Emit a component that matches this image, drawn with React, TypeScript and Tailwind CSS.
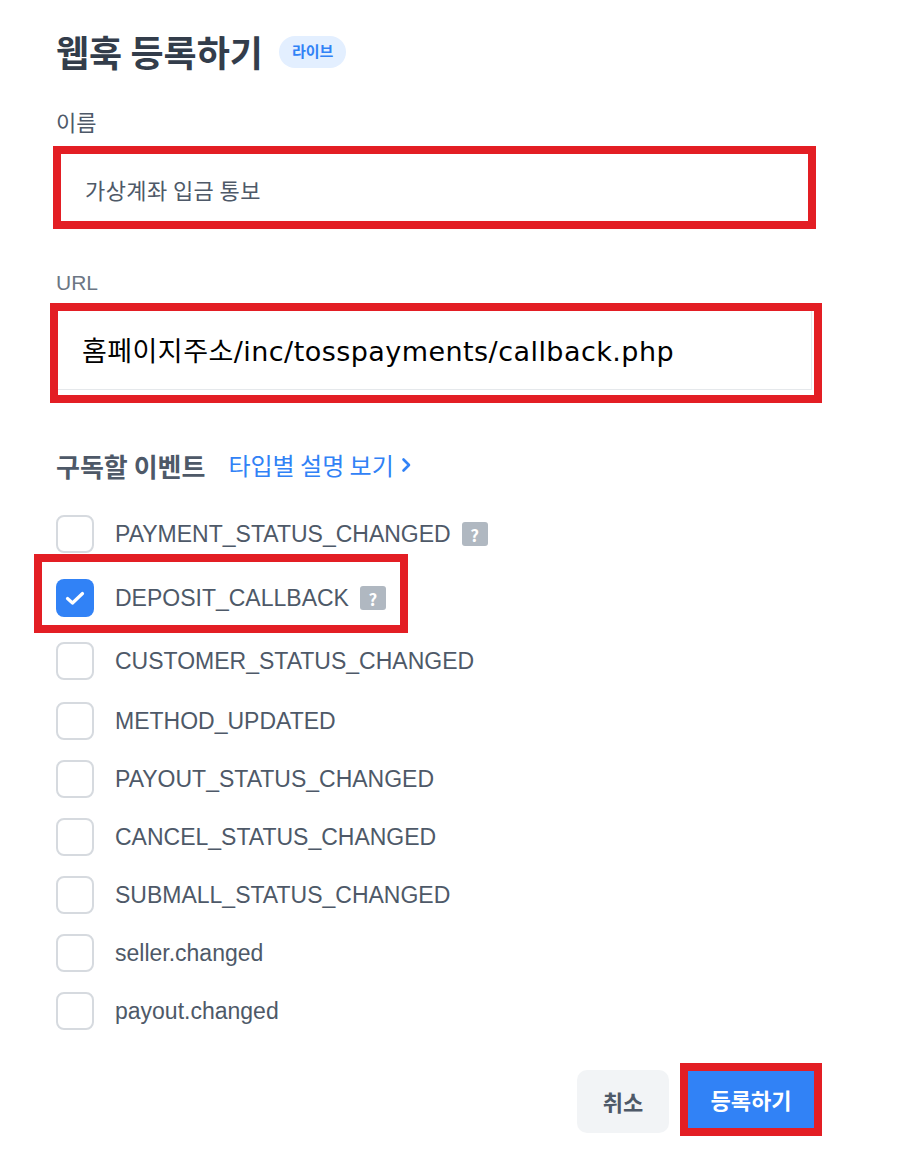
import React from "react";

const SANS = "font-['Liberation_Sans','Noto_Sans_CJK_KR',sans-serif]";
const KR = "font-['Noto_Sans_CJK_KR','Liberation_Sans',sans-serif]";

const events = [
  { name: "PAYMENT_STATUS_CHANGED", help: true, h: "h-[64px]" },
  { name: "DEPOSIT_CALLBACK", help: true, h: "h-[64px]", checked: true },
  { name: "CUSTOMER_STATUS_CHANGED", h: "h-[62px]" },
  { name: "METHOD_UPDATED", h: "h-[58px]" },
  { name: "PAYOUT_STATUS_CHANGED", h: "h-[58px]" },
  { name: "CANCEL_STATUS_CHANGED", h: "h-[58px]" },
  { name: "SUBMALL_STATUS_CHANGED", h: "h-[58px]" },
  { name: "seller.changed", h: "h-[58px]" },
  { name: "payout.changed", h: "h-[58px]" },
];

const Checkbox = ({ checked }: { checked?: boolean }) =>
  checked ? (
    <div className="w-[38px] h-[38px] rounded-[8px] bg-[#3182f6] flex items-center justify-center shrink-0">
      <svg width="24" height="24" viewBox="0 0 24 24" fill="none">
        <path d="M4.5 12.5l5 4.5 10-9.5" stroke="white" strokeWidth="3.2" strokeLinecap="round" strokeLinejoin="round" />
      </svg>
    </div>
  ) : (
    <div className="w-[38px] h-[38px] rounded-[8px] border-[2.5px] border-[#d6dadf] bg-white shrink-0" />
  );

const HelpIcon = () => (
  <span className="ml-[11px] w-[26px] h-[24px] rounded-[3px] bg-[#b0b8c1] text-white text-[17px] font-bold flex items-center justify-center leading-none">
    ?
  </span>
);

const EventRow = ({ name, help, checked }: { name: string; help?: boolean; checked?: boolean }) => (
  <div className="flex items-center">
    <Checkbox checked={checked} />
    <span className={`ml-[21px] text-[23px] text-[#4e5968] ${SANS}`}>{name}</span>
    {help && <HelpIcon />}
  </div>
);

export default function App() {
  return (
    <div className={`w-[916px] h-[1162px] bg-white pl-[56px] ${KR}`}>
      <div className="w-[766px] pt-[31px] flex flex-col">
        {/* title */}
        <div className="flex items-center h-[41px]">
          <h1 className="text-[36px] leading-[41px] font-bold text-[#333d4b]">웹훅 등록하기</h1>
          <span className="ml-[16px] h-[32px] px-[13px] rounded-full bg-[#e3efff] text-[#3182f6] text-[15px] font-bold flex items-center">
            라이브
          </span>
        </div>

        {/* name */}
        <label className="mt-[35px] text-[22px] leading-[28px] text-[#4e5968]">이름</label>
        <div className="mt-[11px] -ml-[3px] w-[763px] h-[83px] border-[8px] border-[#e31e24] flex items-center pl-[24px] pt-[4px]">
          <span className="text-[22px] tracking-[0.4px] text-[#4e5968]">가상계좌 입금 통보</span>
        </div>

        {/* url */}
        <label className={`mt-[40px] text-[21px] leading-[28px] text-[#6b7684] ${SANS}`}>URL</label>
        <div className="mt-[6px] -ml-[6px] w-[772px] h-[100px] border-[8px] border-[#e31e24]">
          <div className="h-[79px] mr-[2px] border-b border-r border-[#e5e8eb] flex items-center pl-[24px] pt-[4px]">
            <span className="text-[27px] tracking-[0.45px] text-black font-['DejaVu_Sans','Noto_Sans_CJK_KR',sans-serif]">
              홈페이지주소/inc/tosspayments/callback.php
            </span>
          </div>
        </div>

        {/* events header */}
        <div className="mt-[46px] flex items-center h-[32px]">
          <span className="text-[26px] font-semibold text-[#4e5968]">구독할 이벤트</span>
          <span className="ml-[23px] text-[24px] text-[#3182f6] flex items-center">
            타입별 설명 보기
            <svg className="ml-[7px]" width="11" height="16" viewBox="0 0 11 16" fill="none">
              <path d="M2.5 2.5l5.5 5.5-5.5 5.5" stroke="#3182f6" strokeWidth="2.6" strokeLinecap="round" strokeLinejoin="round" />
            </svg>
          </span>
        </div>

        {/* event list */}
        <div className="mt-[21px] flex flex-col">
          {events.map((e) =>
            e.checked ? (
              <div key={e.name} className={`${e.h} flex`}>
                <div className="-mt-[12px] -ml-[22px] w-[374px] h-[79px] border-[8px] border-[#e31e24] pl-[14px] pt-[9px] flex items-center">
                  <EventRow name={e.name} help={e.help} checked />
                </div>
              </div>
            ) : (
              <div key={e.name} className={`${e.h} flex items-center`}>
                <EventRow name={e.name} help={e.help} />
              </div>
            )
          )}
        </div>

        {/* buttons */}
        <div className="mt-[23px] flex justify-end items-start h-[73px]">
          <button className="mt-[7px] w-[92px] h-[63px] rounded-[10px] bg-[#f2f4f6] text-[22px] font-bold text-[#4e5968]">
            취소
          </button>
          <div className="ml-[11px] w-[142px] h-[73px] border-[8px] border-[#e31e24]">
            <button className="w-full h-full bg-[#3182f6] text-white text-[22px] font-bold">등록하기</button>
          </div>
        </div>
      </div>
    </div>
  );
}
